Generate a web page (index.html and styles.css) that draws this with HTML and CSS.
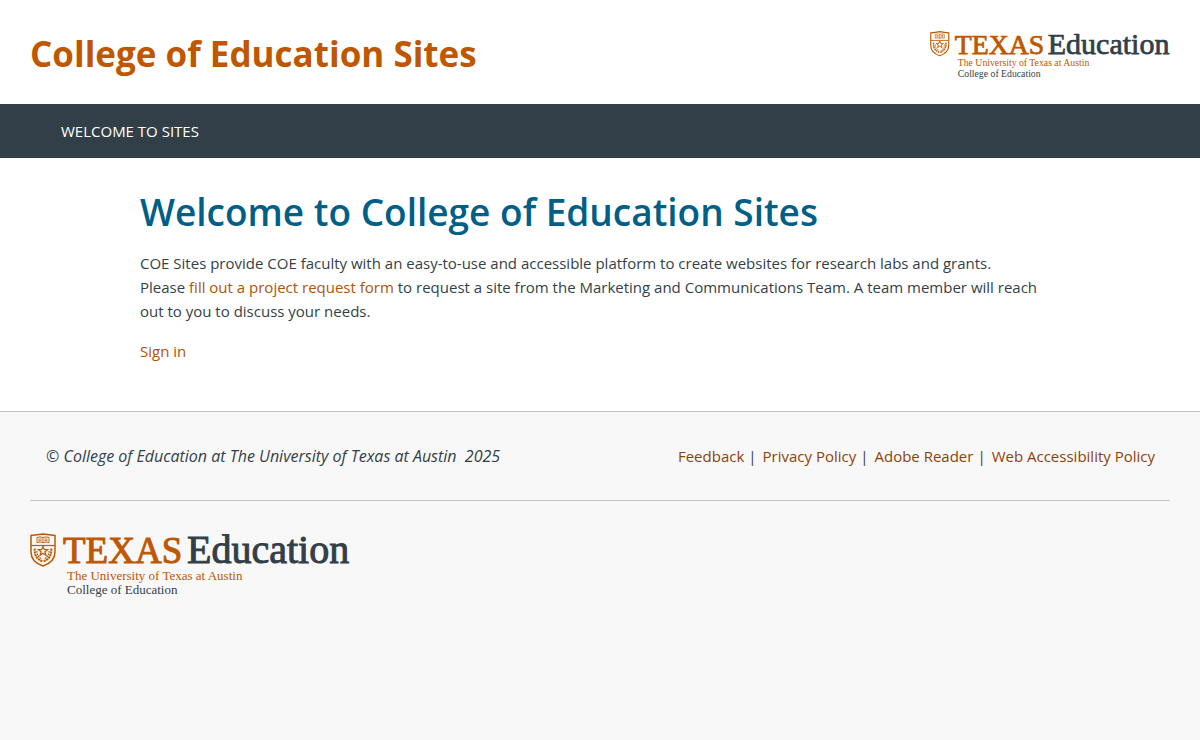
FILE: index.html
```html
<!DOCTYPE html>
<html lang="en">
<head>
<meta charset="utf-8">
<meta name="viewport" content="width=device-width, initial-scale=1">
<title>College of Education Sites</title>
<link rel="stylesheet" href="styles.css">
</head>
<body>
<header class="site-header">
  <a class="site-title" href="#">College of Education Sites</a>
  <a class="header-logo" href="#" aria-label="Texas Education">
    <svg viewBox="0 0 320 68" aria-hidden="true">
      <g fill="none" stroke="#bf5700">
        <path stroke-width="1.5" d="M1 2.5Q7 1.8 13 .9Q19 1.8 25 2.5V19Q25 29 13 33Q1 29 1 19Z"/>
        <path stroke-width="1.2" d="M1 12.5H25"/>
        <path stroke-width=".9" d="M13 4.5Q10 3.2 7 4.5V9.5Q10 8.5 13 9.7Q16 8.5 19 9.5V4.5Q16 3.2 13 4.5V9.7M8.500 6H11.500M8.500 7.700H11.500M14.500 6H17.500M14.500 7.700H17.500"/>
        <path stroke-width="1.2" d="M13 13.200L14.200 16.500L17.700 16.600L14.900 18.700L15.900 22.200L13 20.200L10.100 22.200L11.100 18.700L8.300 16.600L11.800 16.500Z"/>
        <path stroke-width="2" stroke-dasharray="2.200 .6" d="M4.800 15.500Q3.800 25 12.500 28.500M21.200 15.500Q22.200 25 13.500 28.500"/>
        <path stroke-width="1.200" stroke-dasharray="1.600 .8" d="M6.900 18Q6.800 23.500 12 26M19.100 18Q19.200 23.500 14 26"/>
      </g>
      <text class="logo-texas" x="33" y="30">TEXAS</text>
      <text class="logo-unit" x="157" y="30">Education</text>
      <text class="logo-small logo-orange" x="37" y="47">The University of Texas at Austin</text>
      <text class="logo-small" x="37" y="61">College of Education</text>
    </svg>
  </a>
</header>

<nav class="main-nav" aria-label="Main">
  <a href="#">WELCOME TO SITES</a>
</nav>

<main class="content">
  <h1>Welcome to College of Education Sites</h1>
  <p>COE Sites provide COE faculty with an easy-to-use and accessible platform to create websites for research labs and grants.<br>Please <a href="#">fill out a project request form</a> to request a site from the Marketing and Communications Team. A team member will reach out to you to discuss your needs.</p>
  <p><a href="#">Sign in</a></p>
</main>

<footer class="site-footer">
  <div class="footer-row">
    <em class="copyright">© College of Education at The University of Texas at Austin&nbsp; 2025</em>
    <ul class="footer-links">
      <li><a href="#">Feedback</a></li>
      <li><a href="#">Privacy Policy</a></li>
      <li><a href="#">Adobe Reader</a></li>
      <li><a href="#">Web Accessibility Policy</a></li>
    </ul>
  </div>
  <a class="footer-logo" href="#" aria-label="Texas Education">
    <svg viewBox="0 0 320 68" aria-hidden="true">
      <g fill="none" stroke="#bf5700">
        <path stroke-width="1.5" d="M1 2.5Q7 1.8 13 .9Q19 1.8 25 2.5V19Q25 29 13 33Q1 29 1 19Z"/>
        <path stroke-width="1.2" d="M1 12.5H25"/>
        <path stroke-width=".9" d="M13 4.5Q10 3.2 7 4.5V9.5Q10 8.5 13 9.7Q16 8.5 19 9.5V4.5Q16 3.2 13 4.5V9.7M8.500 6H11.500M8.500 7.700H11.500M14.500 6H17.500M14.500 7.700H17.500"/>
        <path stroke-width="1.2" d="M13 13.200L14.200 16.500L17.700 16.600L14.900 18.700L15.900 22.200L13 20.200L10.100 22.200L11.100 18.700L8.300 16.600L11.800 16.500Z"/>
        <path stroke-width="2" stroke-dasharray="2.200 .6" d="M4.800 15.500Q3.800 25 12.500 28.500M21.200 15.500Q22.200 25 13.500 28.500"/>
        <path stroke-width="1.200" stroke-dasharray="1.600 .8" d="M6.900 18Q6.800 23.500 12 26M19.100 18Q19.200 23.500 14 26"/>
      </g>
      <text class="logo-texas" x="33" y="30">TEXAS</text>
      <text class="logo-unit" x="157" y="30">Education</text>
      <text class="logo-small logo-orange" x="37" y="47">The University of Texas at Austin</text>
      <text class="logo-small" x="37" y="61">College of Education</text>
    </svg>
  </a>
</footer>
</body>
</html>
```
FILE: styles.css
```css
* { box-sizing: border-box; }

body {
  margin: 0;
  min-height: 100vh;
  display: flex;
  flex-direction: column;
  background: #fff;
  color: #333f48;
  font-family: "Segoe UI", "Open Sans", "Noto Sans", sans-serif;
  font-size: 15px;
  line-height: 24px;
}

a { color: #ad5408; text-decoration: none; }
a:hover { text-decoration: underline; }

.site-header {
  display: flex;
  justify-content: space-between;
  align-items: flex-end;
  padding: 28px 30px 22px;
}

.site-title {
  color: #bf5700;
  font-size: 35px;
  font-weight: 700;
  line-height: 52px;
  padding-bottom: 2px;
}

.header-logo svg,
.footer-logo svg { display: block; overflow: visible; }
.header-logo svg { width: 240px; }
.footer-logo svg { width: 320px; }

.logo-texas, .logo-unit, .logo-small {
  font-family: "Liberation Serif", serif;
  fill: #333f48;
}
.logo-texas { font-size: 37px; fill: #bf5700; stroke: #bf5700; stroke-width: 1px; }
.logo-unit { font-size: 40px; stroke: #333f48; stroke-width: 1px; }
.logo-small { font-size: 13px; }
.logo-orange { fill: #bf5700; }

.main-nav {
  display: flex;
  padding: 15px 61px;
  background: #333f48;
}
.main-nav a { color: #fff; }

.content {
  width: 100%;
  max-width: 920px;
  margin: 0 auto;
  padding: 28px 0 48px;
}

h1 {
  margin: 0 0 13px;
  color: #005f86;
  font-size: 37px;
  font-weight: 600;
  line-height: 52px;
}

p { margin: 0 0 16px; }
p:last-child { margin: 0; }

.site-footer {
  flex: 1;
  padding: 32px 30px;
  border-top: 1px solid #c1c5c8;
  background: #f8f8f8;
}

.footer-row {
  display: flex;
  justify-content: space-between;
  padding: 0 15px 32px 16px;
  margin-bottom: 32px;
  border-bottom: 1px solid #c1c5c8;
}

.copyright { font-size: 16px; }

.footer-links {
  display: flex;
  margin: 0;
  padding: 0;
  list-style: none;
}
.footer-links a { color: #8f4208; }
.footer-links li:not(:last-child)::after {
  content: "|";
  margin: 0 6px 0 4px;
}

.footer-logo { display: inline-block; }
```
